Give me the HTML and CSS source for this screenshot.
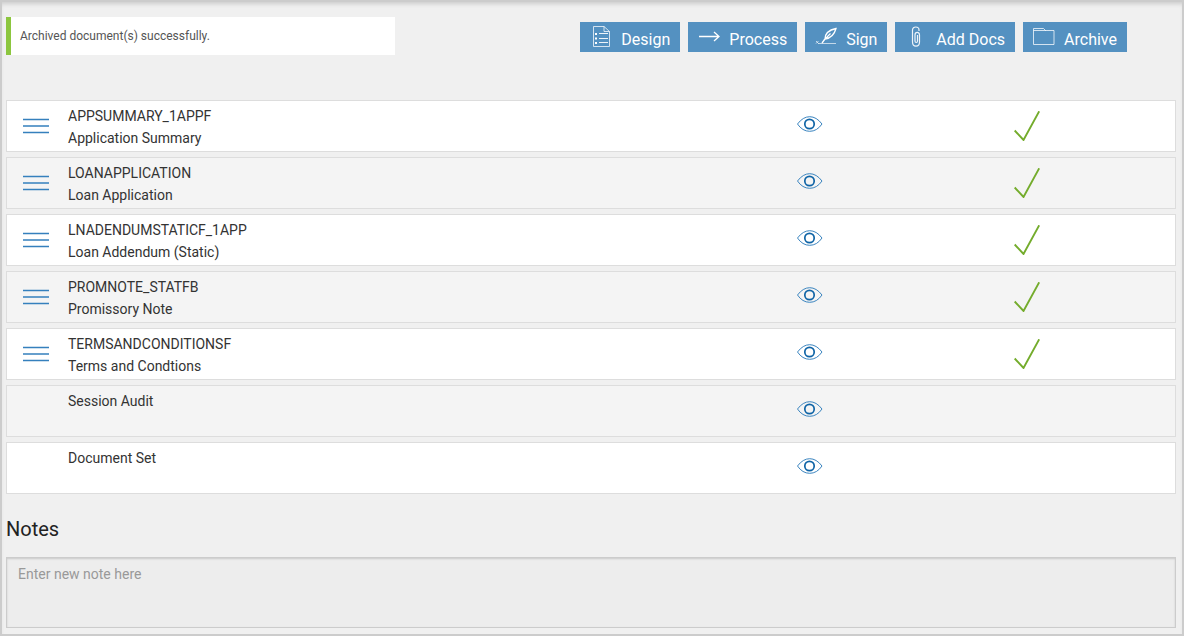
FILE: index.html
```html
<!DOCTYPE html>
<html lang="en">
<head>
    <meta charset="UTF-8">
    <meta name="viewport" content="width=device-width, initial-scale=1.0">
    <title>Documents</title>
    <link rel="stylesheet" href="styles.css">
</head>
<body>
    <!-- Shared icons -->
    <svg class="sprite" aria-hidden="true">
        <symbol id="icon-menu" viewBox="0 0 26 16">
            <path d="M0 1.500h26M0 8h26M0 14.500h26" fill="none" stroke="#3580bd" stroke-width="1.7"/>
        </symbol>
        <symbol id="icon-eye" viewBox="0 0 26 16">
            <path d="M.5 8Q6 .7 12.700 .7T25 8Q20 15.300 12.700 15.300T.5 8z" fill="none" stroke="#3a84bf" stroke-width="1"/>
            <circle cx="12.5" cy="8" r="4.7" fill="none" stroke="#0f64a6" stroke-width="1.7"/>
        </symbol>
        <symbol id="icon-check" viewBox="0 0 26 30">
            <path d="M.7 19.5L9.5 29L25.2.3" fill="none" stroke="#74ac2c" stroke-width="1.9"/>
        </symbol>
    </svg>

    <div class="page">
        <header class="header">
            <div class="alert" role="status">Archived document(s) successfully.</div>
            <div class="toolbar">
                <button type="button" class="btn">
                    <svg class="icon" width="20" height="22" viewBox="0 0 20 22" fill="none" stroke="#fff">
                        <path d="M2.5.5H13L18.5 5.5V20.5H2.5zM13 .5V5.5H18.5" opacity=".75"/>
                        <path d="M8 7.5h9M8 12.5h9M8 16.5h9" opacity=".9"/>
                        <path d="M4 8h2M4 12.5h2M4 17h2" stroke-width="2"/>
                    </svg>
                    <span>Design</span>
                </button>
                <button type="button" class="btn">
                    <svg class="icon" width="20" height="22" viewBox="0 0 20 22" fill="none" stroke="#fff">
                        <path d="M0 10.5H20M15 6L20 10.5L15 15" stroke-width="1.3"/>
                    </svg>
                    <span>Process</span>
                </button>
                <button type="button" class="btn">
                    <svg class="icon" width="20" height="22" viewBox="0 0 20 22" fill="none" stroke="#fff">
                        <path d="M6 17L9 13C9 8 13 4 20 2.5C18.500 8 16 12 9 13L14.500 7.500" stroke-width="1.3"/>
                        <path d="M0 15L2.500 17.500M0 17.500L2.500 15M2 17.500H20" opacity=".65"/>
                    </svg>
                    <span>Sign</span>
                </button>
                <button type="button" class="btn">
                    <svg class="icon" width="20" height="22" viewBox="0 0 20 22" fill="none" stroke="#fff">
                        <path d="M6.5 5V16C6.5 21.500 13.500 21.500 13.500 16V9C13.500 5.500 9 5.500 9 9V15C9 17 11.500 17 11.500 15V9M6.500 7V4C6.500 0 13 0 13 4V5" stroke-width="1.2" opacity=".9"/>
                    </svg>
                    <span>Add Docs</span>
                </button>
                <button type="button" class="btn">
                    <svg class="icon" width="20" height="22" viewBox="0 0 20 22" fill="none" stroke="#fff">
                        <path d="M-.5 18.500V2.500H9.500L11.500 4.500H20V18.500zM-.5 4.500H12" opacity=".75"/>
                    </svg>
                    <span>Archive</span>
                </button>
            </div>
        </header>

        <ul class="documents">
            <li class="document">
                <button type="button" class="handle" aria-label="Move"><svg width="26" height="16"><use href="#icon-menu"/></svg></button>
                <div class="document-name">APPSUMMARY_1APPF<br>Application Summary</div>
                <button type="button" class="view" aria-label="View"><svg width="26" height="16"><use href="#icon-eye"/></svg></button>
                <svg class="check" width="26" height="30"><use href="#icon-check"/></svg>
            </li>
            <li class="document">
                <button type="button" class="handle" aria-label="Move"><svg width="26" height="16"><use href="#icon-menu"/></svg></button>
                <div class="document-name">LOANAPPLICATION<br>Loan Application</div>
                <button type="button" class="view" aria-label="View"><svg width="26" height="16"><use href="#icon-eye"/></svg></button>
                <svg class="check" width="26" height="30"><use href="#icon-check"/></svg>
            </li>
            <li class="document">
                <button type="button" class="handle" aria-label="Move"><svg width="26" height="16"><use href="#icon-menu"/></svg></button>
                <div class="document-name">LNADENDUMSTATICF_1APP<br>Loan Addendum (Static)</div>
                <button type="button" class="view" aria-label="View"><svg width="26" height="16"><use href="#icon-eye"/></svg></button>
                <svg class="check" width="26" height="30"><use href="#icon-check"/></svg>
            </li>
            <li class="document">
                <button type="button" class="handle" aria-label="Move"><svg width="26" height="16"><use href="#icon-menu"/></svg></button>
                <div class="document-name">PROMNOTE_STATFB<br>Promissory Note</div>
                <button type="button" class="view" aria-label="View"><svg width="26" height="16"><use href="#icon-eye"/></svg></button>
                <svg class="check" width="26" height="30"><use href="#icon-check"/></svg>
            </li>
            <li class="document">
                <button type="button" class="handle" aria-label="Move"><svg width="26" height="16"><use href="#icon-menu"/></svg></button>
                <div class="document-name">TERMSANDCONDITIONSF<br>Terms and Condtions</div>
                <button type="button" class="view" aria-label="View"><svg width="26" height="16"><use href="#icon-eye"/></svg></button>
                <svg class="check" width="26" height="30"><use href="#icon-check"/></svg>
            </li>
            <li class="document">
                <div class="document-name">Session Audit</div>
                <button type="button" class="view" aria-label="View"><svg width="26" height="16"><use href="#icon-eye"/></svg></button>
            </li>
            <li class="document">
                <div class="document-name">Document Set</div>
                <button type="button" class="view" aria-label="View"><svg width="26" height="16"><use href="#icon-eye"/></svg></button>
            </li>
        </ul>

        <h2><label for="note">Notes</label></h2>
        <textarea id="note" placeholder="Enter new note here"></textarea>
    </div>
</body>
</html>
```
FILE: styles.css
```css
* {
    box-sizing: border-box;
}
body {
    margin: 0;
    font-family: Roboto, "Liberation Sans", sans-serif;
    font-size: 14px;
    line-height: 22px;
    color: #333;
    background-color: #f0f0f0;
}
.sprite {
    display: none;
}
.page {
    min-height: 100vh;
    padding: 15px 6px 5px 4px;
    border: 2px solid #ccc;
    box-shadow: inset 0 4px 4px -2px rgba(0, 0, 0, 0.15);
}
.header {
    display: flex;
    justify-content: space-between;
    align-items: flex-start;
    padding-right: 49px;
    margin-bottom: 45px;
}
.alert {
    width: 389px;
    padding: 8px 9px;
    border-left: 5px solid #8cc63f;
    background: white;
    color: #555;
    font-size: 12px;
}
.toolbar {
    display: flex;
    gap: 8px;
    padding-top: 5px;
}
.btn {
    display: flex;
    align-items: flex-start;
    gap: 10px;
    height: 30px;
    padding: 4px 10px 0 11px;
    border: none;
    background-color: #5491c1;
    color: white;
    font-family: inherit;
    font-size: 16px;
    line-height: 28px;
    cursor: pointer;
}
.btn:hover {
    background-color: #3f7fb2;
}
.icon {
    overflow: visible;
}
.btn span {
    height: 26px;
}
.documents {
    list-style: none;
    margin: 0;
    padding: 0;
}
.document {
    display: grid;
    grid-template-columns: 61px 1fr 18.5% 14%;
    height: 52px;
    margin-bottom: 5px;
    border: 1px solid #ddd;
    background: white;
}
.document:nth-child(even) {
    background: #f4f4f4;
}
.document-name {
    grid-column: 2;
    padding-top: 4px;
}
.handle, .view {
    display: flex;
    padding: 0;
    border: none;
    background: none;
    cursor: pointer;
}
.handle {
    padding: 17px 0 0 16px;
}
.view {
    justify-self: start;
    padding: 15px 0 0 2px;
}
.check {
    margin: 10px 0 0 3px;
}
h2 {
    margin: 24px 0 17px;
    color: #222;
    font-size: 20px;
    font-weight: normal;
    line-height: 22px;
}
textarea {
    display: block;
    width: 100%;
    height: 71px;
    padding: 5px 11px;
    border: 1px solid #ccc;
    background-color: #ededed;
    box-shadow: inset 0 1px 2px rgba(0, 0, 0, 0.15);
    color: #333;
    font-family: inherit;
    font-size: 14px;
    line-height: 22px;
    resize: none;
}
textarea::placeholder {
    color: #999;
}
```
